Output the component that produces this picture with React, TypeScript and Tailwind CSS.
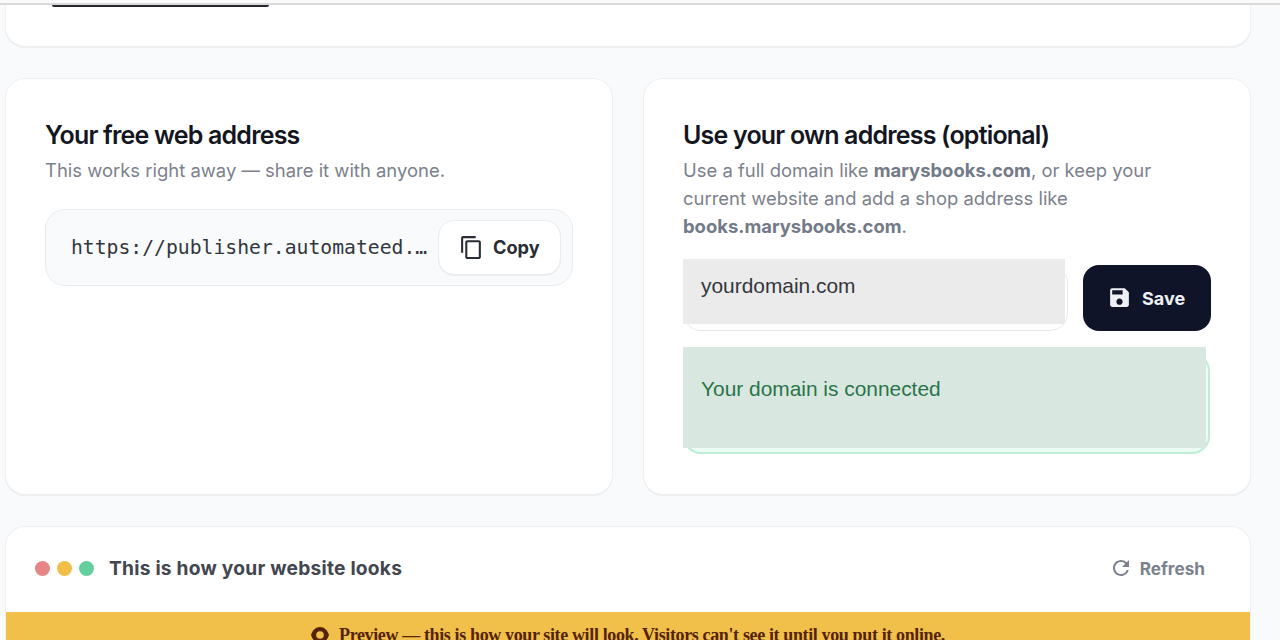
import { MdContentCopy, MdRefresh, MdSave } from "react-icons/md";

function AddressCard() {
  return (
    <div className="w-[608px] rounded-[20px] border border-[#eef0f3] bg-white px-[39px] pt-[42px] shadow-2xs">
      <h2 className="text-[25px] leading-[28px] font-semibold tracking-[-0.81px] text-[#14161f] whitespace-nowrap">Your free web address</h2>
      <p className="mt-[7px] text-[18.46px] leading-[28px] text-[#7b818c] whitespace-nowrap">This works right away — share it with anyone.</p>
      <div className="mt-[25px] flex h-[77px] items-center rounded-[20px] border border-[#e9ecf0] bg-[#f8fafc] pl-[25px] pr-[10px]">
        <span className="w-[358px] pt-px font-['DejaVu_Sans_Mono',monospace] text-[19.73px] text-[#33363d] whitespace-nowrap">https://publisher.automateed.…</span>
        <button className="ml-[9px] flex h-[55px] w-[123px] items-center rounded-[16px] border border-[#e9ecf0] bg-white pl-[20px] text-[18.2px] font-bold text-[#2a2d36] shadow-2xs">
          <MdContentCopy className="mr-[9px] size-[25px] shrink-0" />
          <span>Copy</span>
        </button>
      </div>
    </div>
  )
}

function DomainCard() {
  return (
    <div className="w-[608px] rounded-[20px] border border-[#eef0f3] bg-white px-[39px] pt-[42px] shadow-2xs">
      <h2 className="text-[25px] leading-[28px] font-semibold tracking-[-0.81px] text-[#14161f] whitespace-nowrap">Use your own address (optional)</h2>
      <p className="mt-[8px] text-[18.46px] leading-[27.8px] text-[#7b818c] whitespace-nowrap">
        Use a full domain like <b className="font-bold text-[#737a87]">marysbooks.com</b>, or keep your<br />
        current website and add a shop address like<br />
        <b className="font-bold text-[#737a87]">books.marysbooks.com</b>.
      </p>
      <div className="mt-[24.6px] flex items-start">
        <div className="relative h-[66px] w-[385px] rounded-[18px] border border-[#e6e8eb]">
          <div className="absolute -top-[7px] -left-px h-[65px] w-[382px] bg-[#ebebeb] pl-[18px] pt-[13px] font-['Liberation_Sans',Arial,sans-serif] text-[20.9px] leading-[28px] text-[#33373d] whitespace-nowrap">yourdomain.com</div>
        </div>
        <button className="ml-[15px] flex h-[66px] w-[128px] items-center rounded-[16px] bg-[#0f1428] pl-[24px] text-[18px] font-bold text-[#eef0f5]">
          <MdSave className="mr-[10px] size-[25px] shrink-0" />
          <span className="pt-px">Save</span>
        </button>
      </div>
      <div className="relative mt-[22px] h-[101px] w-[527px] rounded-[18px] border-2 border-[#bdeed5] bg-[#ecfdf5]">
        <div className="absolute -top-[8px] -left-[2px] h-[101px] w-[523px] bg-[#d8e8e0] pl-[18px] pt-[28px] font-['Liberation_Sans',Arial,sans-serif] text-[20.9px] leading-[28px] text-[#2a7449] whitespace-nowrap">Your domain is connected</div>
      </div>
    </div>
  )
}

function Preview() {
  return (
    <div className="mt-[31px] ml-[5px] w-[1246px] overflow-hidden rounded-t-[20px] border border-b-0 border-[#eef0f3] bg-white">
      <div className="flex h-[85px] items-center pb-[2px] pl-[29px] pr-[45px]">
        <div className="flex gap-[7px]">
          <span className="size-[15px] rounded-full bg-[#e58585]"></span>
          <span className="size-[15px] rounded-full bg-[#f1be47]"></span>
          <span className="size-[15px] rounded-full bg-[#63cf9c]"></span>
        </div>
        <span className="ml-[15px] text-[19.2px] font-bold tracking-[0.23px] text-[#42464f] whitespace-nowrap">This is how your website looks</span>
        <span className="ml-auto flex items-center text-[17.2px] font-bold text-[#7b828e]">
          <MdRefresh className="mr-[7px] size-[24px]" />
          Refresh
        </span>
      </div>
      <div className="flex h-[60px] items-start bg-[#f0c04b] pl-[305px] pt-[11px] font-['Liberation_Serif',serif] text-[18px] leading-[24px] font-bold tracking-[-0.37px] text-[#562307] whitespace-nowrap">
        <svg viewBox="0 0 18 16" className="mt-[4px] mr-[10px] h-[16px] w-[18px]">
          <path fill="currentColor" fillRule="evenodd" d="M9 0C4.8 0 1.4 3 0 8c1.4 5 4.8 8 9 8s7.600-3 9-8C16.600 3 13.200 0 9 0Zm0 4.200a3.800 3.800 0 1 1 0 7.600 3.800 3.800 0 0 1 0-7.600Z" />
        </svg>
        Preview — this is how your site will look. Visitors can't see it until you put it online.
      </div>
    </div>
  )
}

export default function App() {
  return (
    <div className="h-[640px] w-[1280px] overflow-hidden bg-[#f8fafc] font-['Inter',sans-serif]">
      <div className="h-[5px] border-b-2 border-[#dadadb] bg-[#fafafa]"></div>
      <div className="ml-[5px] h-[42px] w-[1246px] rounded-b-[20px] border border-t-0 border-[#eef0f3] bg-white shadow-2xs">
        <div className="ml-[46px] h-[2px] w-[217px] rounded-b-[4px] bg-[#26272d]"></div>
      </div>
      <div className="mt-[31px] ml-[5px] flex h-[417px] gap-[30px]">
        <AddressCard />
        <DomainCard />
      </div>
      <Preview />
    </div>
  )
}
